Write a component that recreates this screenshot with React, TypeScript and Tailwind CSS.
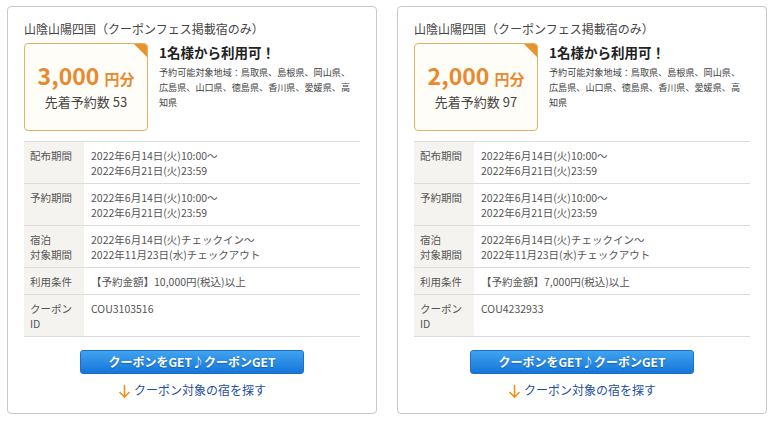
import React from "react";

interface Coupon {
  amount: string;
  remain: number;
  minPrice: string;
  id: string;
}

const coupons: Coupon[] = [
  { amount: "3,000", remain: 53, minPrice: "10,000", id: "COU3103516" },
  { amount: "2,000", remain: 97, minPrice: "7,000", id: "COU4232933" },
];

const font = { fontFamily: '"Noto Sans CJK JP", "Noto Sans", sans-serif' };

function Row({ label, children, last }: { label: React.ReactNode; children: React.ReactNode; last?: boolean }) {
  return (
    <div className={`flex border-t border-[#dcdcdc] ${last ? "border-b" : ""}`}>
      <div className="w-[60px] shrink-0 bg-[#f5f3f0] pl-[6px] pt-[6px] pb-[5px] text-[#555]">{label}</div>
      <div className="pl-[7px] pt-[6px] pb-[5px] text-[#555]">{children}</div>
    </div>
  );
}

function CouponCard({ c }: { c: Coupon }) {
  return (
    <div className="w-[370px] h-[408px] rounded-[4px] border border-[#c8c8c8] bg-white px-[16px] pt-[13px]">
      <div className="text-[12px] leading-[18px] text-[#444]">山陰山陽四国（クーポンフェス掲載宿のみ）</div>
      <div className="mt-[5px] flex">
        <div className="relative h-[88px] w-[124px] shrink-0 overflow-hidden rounded-[4px] border border-[#e6b063] bg-[#fffdf7]">
          <svg className="absolute right-[-1px] top-[-1px]" width="15" height="15" viewBox="0 0 15 15">
            <polygon points="0,0 15,0 15,15" fill="#e8922c" />
          </svg>
          <div className="mt-[20px] text-center leading-none">
            <span className="text-[23px] font-bold text-[#e8892f]">{c.amount}</span>
            <span className="ml-[5px] text-[15px] font-bold text-[#e8892f]">円分</span>
          </div>
          <div className="mt-[7px] text-center text-[13px] leading-[16px] text-[#444]">先着予約数 {c.remain}</div>
        </div>
        <div className="ml-[11px]">
          <div className="text-[13.5px] font-bold leading-[18px] text-[#222]">1名様から利用可！</div>
          <div className="mt-[4px] w-[194px] text-[9.1px] leading-[15px] text-[#444]">
            予約可能対象地域：鳥取県、島根県、岡山県、広島県、山口県、徳島県、香川県、愛媛県、高知県
          </div>
        </div>
      </div>
      <div className="mt-[10px] text-[10.5px] leading-[15px]">
        <Row label="配布期間">
          2022年6月14日(火)10:00～
          <br />
          2022年6月21日(火)23:59
        </Row>
        <Row label="予約期間">
          2022年6月14日(火)10:00～
          <br />
          2022年6月21日(火)23:59
        </Row>
        <Row label={<>宿泊<br />対象期間</>}>
          2022年6月14日(火)チェックイン～
          <br />
          2022年11月23日(水)チェックアウト
        </Row>
        <Row label="利用条件">【予約金額】{c.minPrice}円(税込)以上</Row>
        <Row label={<>クーポン<br />ID</>} last>
          {c.id}
        </Row>
      </div>
      <div className="mt-[13px] flex justify-center">
        <button className="h-[24px] w-[224px] rounded-[3px] border border-[#1f6fc9] bg-gradient-to-b from-[#3fa3f0] to-[#1376d8] text-[12px] font-bold text-white [text-shadow:0_1px_1px_rgba(0,40,100,0.4)]">
          クーポンをGET♪クーポンGET
        </button>
      </div>
      <div className="mt-[7px] flex items-center justify-center text-[12px] leading-[18px] text-[#1f4f9a]">
        <svg width="13" height="15" viewBox="0 0 13 15" className="mr-[3px] mt-[3px]">
          <path d="M6.5 1 V13 M1.5 8 L6.5 13 L11.5 8" stroke="#f0921e" strokeWidth="1.6" fill="none" />
        </svg>
        クーポン対象の宿を探す
      </div>
    </div>
  );
}

export default function App() {
  return (
    <div className="flex h-[421px] w-[773px] gap-[20px] bg-white pl-[7px] pt-[6px]" style={font}>
      {coupons.map((c) => (
        <CouponCard key={c.id} c={c} />
      ))}
    </div>
  );
}
